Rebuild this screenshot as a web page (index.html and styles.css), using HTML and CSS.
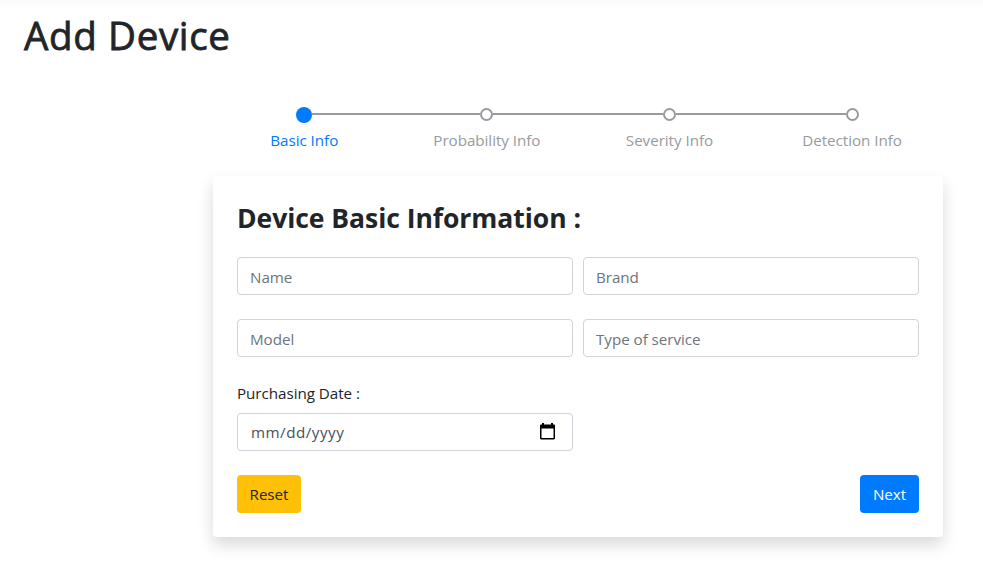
FILE: index.html
```html
<!DOCTYPE html>
<html lang="en">
<head>
<meta charset="utf-8">
<title>Add Device</title>
<link rel="stylesheet" href="styles.css">
</head>
<body>
<main class="page">
  <h1 class="page-title">Add Device</h1>
  <ol class="stepper">
    <li class="step step-active"><span class="track"><span class="dot"></span></span><span class="label">Basic Info</span></li>
    <li class="step"><span class="track"><span class="dot"></span></span><span class="label">Probability Info</span></li>
    <li class="step"><span class="track"><span class="dot"></span></span><span class="label">Severity Info</span></li>
    <li class="step"><span class="track"><span class="dot"></span></span><span class="label">Detection Info</span></li>
  </ol>
  <form class="card">
    <h2 class="card-title">Device Basic Information :</h2>
    <div class="fields">
      <input class="control" type="text" placeholder="Name">
      <input class="control" type="text" placeholder="Brand">
      <input class="control" type="text" placeholder="Model">
      <input class="control" type="text" placeholder="Type of service">
      <div class="date-field">
        <div class="date-label">Purchasing Date :</div>
        <div class="control date-control">
          <span class="date-text">mm/dd/yyyy</span>
          <svg class="calendar" width="15" height="17" viewBox="0 0 15 17"><path fill="#000" fill-rule="evenodd" d="M2 0h2v1.5h7V0h2v1.5h.8c.7 0 1.2.5 1.2 1.2v12.6c0 .7-.5 1.2-1.2 1.2H1.2C.5 16.500 0 16 0 15.300V2.700C0 2 .5 1.500 1.200 1.500H2zM1.500 5.500V15h12V5.500z"/></svg>
        </div>
      </div>
    </div>
    <div class="actions">
      <button class="btn btn-warning" type="reset">Reset</button>
      <button class="btn btn-primary" type="button">Next</button>
    </div>
  </form>
</main>
</body>
</html>
```
FILE: styles.css
```css
* { box-sizing: border-box; }
body {
  margin: 0;
  height: 572px;
  overflow: hidden;
  background: linear-gradient(#f9f9f9, #fff 9px) #fff;
  color: #212529;
  font: 400 15.2px/24px "Open Sans", "Noto Sans", sans-serif;
  letter-spacing: -.04px;
}
.page { padding: 11px 40px 0 24px; }
.page-title {
  margin: 0;
  font-size: 38.5px;
  line-height: 48px;
  font-weight: 500;
  letter-spacing: .65px;
  -webkit-text-stroke: .8px #212529;
}
.stepper {
  display: grid;
  grid-template-columns: repeat(4, 182.6px);
  margin: 47px 0 0 189px;
  padding: 0;
  list-style: none;
}
.step {
  display: flex;
  flex-direction: column;
  align-items: center;
  color: #979b9f;
}
.track {
  display: flex;
  align-items: center;
  width: 100%;
  height: 17px;
}
.track::before, .track::after {
  content: "";
  flex: 1;
  height: 2px;
  margin-top: -1px;
  background: #979a9f;
}
.step:first-child .track::before, .step:last-child .track::after { background: none; }
.dot {
  width: 13px;
  height: 13px;
  border: 2px solid #979a9f;
  border-radius: 50%;
}
.step-active .dot { width: 16px; height: 16px; border: 0; background: #007bff; }
.step-active { color: #007bff; }
.label { margin-top: 5px; white-space: nowrap; }
.card {
  width: 730px;
  height: 361px;
  margin: 24px 0 0 189px;
  padding: 25px 24px 24px;
  border-radius: 4px;
  background: #fff;
  box-shadow: 0 8px 16px rgba(0, 0, 0, .15);
}
.card-title {
  margin: 0 0 22px;
  font-size: 26.5px;
  line-height: 34px;
  font-weight: 700;
  letter-spacing: -.04px;
  white-space: nowrap;
}
.fields {
  display: grid;
  grid-template-columns: 336px 336px;
  gap: 24px 10px;
}
.control {
  width: 336px;
  height: 38px;
  padding: 1px 12px 0;
  border: 1px solid #ced4da;
  border-radius: 4px;
  background: #fff;
  color: #495057;
  font: inherit;
  letter-spacing: inherit;
}
.control::placeholder { color: #6c757d; opacity: 1; }
.date-label { margin-bottom: 8px; }
.date-control {
  display: flex;
  align-items: center;
  justify-content: space-between;
  padding: 0 17px 0 13px;
}
.date-text { letter-spacing: .5px; }
.calendar { margin-top: -2px; }
.actions { display: flex; justify-content: space-between; margin-top: 24px; }
.btn {
  height: 38px;
  padding: 0 0 1px;
  border: 0;
  border-radius: 4px;
  font: inherit;
  letter-spacing: inherit;
}
.btn-warning { width: 64px; background: #ffc107; color: #212529; }
.btn-primary { width: 59px; background: #007bff; color: #fff; }
```
